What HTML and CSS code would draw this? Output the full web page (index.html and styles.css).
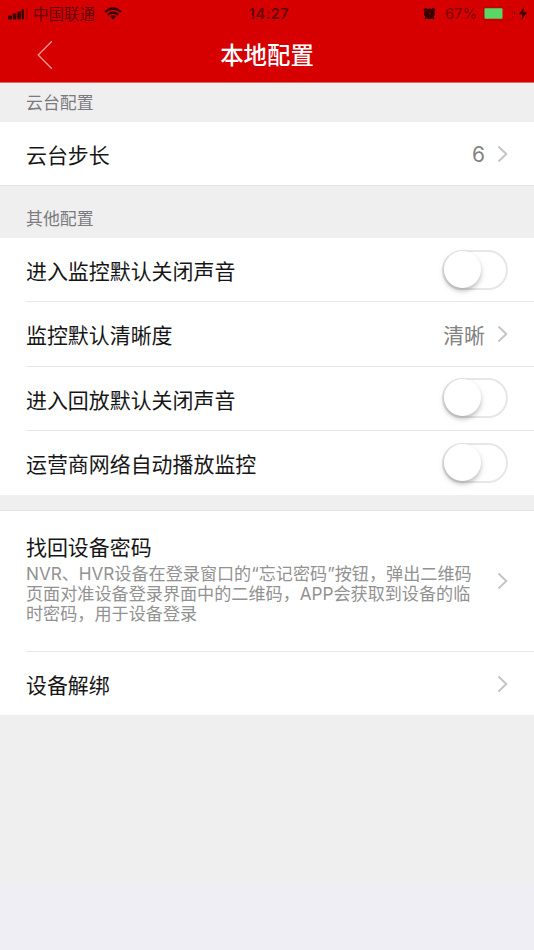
FILE: index.html
```
<!DOCTYPE html>
<html lang="zh-CN">
<head>
<meta charset="utf-8">
<title>本地配置</title>
<link rel="stylesheet" href="styles.css">
</head>
<body>
<header class="header">
  <div class="status">
    <div class="status-left">
      <svg class="signal" width="22" height="12" viewBox="0 0 22 12"><rect x="0" y="7.500" width="4" height="4" rx="1"/><rect x="4.700" y="5.500" width="3.600" height="6" rx="1"/><rect x="9.300" y="3.500" width="3.600" height="8" rx="1"/><rect x="13.600" y="1" width="2.400" height="10.500" rx="1"/><rect x="18" y="0" width="2" height="11.500" rx="1" opacity=".2"/></svg>
      <span class="carrier">中国联通</span>
      <svg class="wifi" width="18" height="13" viewBox="0 0 18 13"><path d="M1 5Q9-2 17 5M3.800 7.800Q9 3.200 14.200 7.800" fill="none" stroke="currentColor" stroke-width="2.300"/><path d="M6 9.600Q9 7 12 9.600L9 12.600Z"/></svg>
    </div>
    <div class="time">14:27</div>
    <div class="status-right">
      <svg width="13" height="13" viewBox="0 0 13 13"><circle cx="6.500" cy="6.800" r="5.400"/><path d="M1 3.500L3.500 1.300M12 3.500L9.500 1.300M3.200 10.500L2 12M9.800 10.500L11 12" stroke="currentColor" stroke-width="1.900"/><path d="M7 4.500V7H5" fill="none" stroke="#900000" stroke-width=".8"/></svg>
      <span class="percent">67%</span>
      <svg class="battery" width="33" height="15" viewBox="0 0 33 15"><rect x=".6" y=".8" width="28.800" height="13.400" rx="2.500" fill="none" stroke="#b40000" stroke-width="1"/><rect x="1.500" y="2.300" width="18" height="10.400" rx="1" fill="#58d764"/><path d="M31 5Q33 7.500 31 10Z" fill="#980000"/></svg>
      <svg class="bolt" width="8" height="13" viewBox="0 0 8 13"><path d="M5 0L0 7.300H3.400L2.500 13L8 5.300H4.500Z"/></svg>
    </div>
  </div>
  <nav class="nav">
    <svg class="back" width="16" height="30" viewBox="0 0 16 30"><path d="M14.800 1.300L1.200 15L14.800 28.700" fill="none" stroke="#ff9b94" stroke-width="1.300"/></svg>
    <h1>本地配置</h1>
    <span></span>
  </nav>
</header>
<main>
  <h2 class="section first">云台配置</h2>
  <div class="group one">
    <div class="row"><span>云台步长</span><span class="value">6</span><svg class="chevron" viewBox="0 0 11 18"><path d="M1.500 1.500L9.300 9L1.500 16.500"/></svg></div>
  </div>
  <h2 class="section other">其他配置</h2>
  <div class="group settings">
    <div class="row"><span>进入监控默认关闭声音</span><i class="switch"></i></div>
    <div class="row"><span>监控默认清晰度</span><span class="value">清晰</span><svg class="chevron" viewBox="0 0 11 18"><path d="M1.500 1.500L9.300 9L1.500 16.500"/></svg></div>
    <div class="row"><span>进入回放默认关闭声音</span><i class="switch"></i></div>
    <div class="row"><span>运营商网络自动播放监控</span><i class="switch"></i></div>
  </div>
  <div class="group device">
    <div class="row recover">
      <div class="copy"><div class="label">找回设备密码</div>
        <p>NVR、HVR设备在登录窗口的“忘记密码”按钮，弹出二维码<br>页面对准设备登录界面中的二维码，APP会获取到设备的临<br>时密码，用于设备登录</p></div>
      <svg class="chevron" viewBox="0 0 11 18"><path d="M1.500 1.500L9.300 9L1.500 16.500"/></svg>
    </div>
    <div class="row unbind"><span>设备解绑</span><svg class="chevron" viewBox="0 0 11 18"><path d="M1.500 1.500L9.300 9L1.500 16.500"/></svg></div>
  </div>
</main>
<footer class="bottom"></footer>
</body>
</html>
```
FILE: styles.css
```
* { box-sizing: border-box; }
body {
  margin: 0;
  width: 534px;
  height: 950px;
  display: flex;
  flex-direction: column;
  overflow: hidden;
  background: #efefef;
  font-family: Inter, "Noto Sans CJK SC", sans-serif;
  color: #161616;
}
h1, h2, p { margin: 0; }
.header { height: 83px; background: #d60000; border-bottom: 1px solid #df6b6b; }
.status {
  height: 27px;
  padding: 0 7px 0 8px;
  display: grid;
  grid-template-columns: 1fr auto 1fr;
  align-items: center;
  color: #350000;
  fill: currentColor;
}
.status-left, .status-right { display: flex; align-items: center; }
.status-right { justify-content: flex-end; }
.carrier { margin-left: 3px; padding-top: 2px; font-size: 15.500px; line-height: 20px; color: #650000; }
.wifi { margin-left: 9px; }
.time { padding-left: 3px; font-size: 14.500px; font-weight: 600; letter-spacing: .5px; color: #650000; }
.percent { margin-left: 8px; font-size: 14.800px; color: #7d0000; }
.battery { margin-left: 6px; }
.bolt { margin-left: 3px; }
.status-right > svg:first-child { margin-right: 1px; }
.nav {
  height: 55px;
  padding: 0 37px;
  display: grid;
  grid-template-columns: 1fr auto 1fr;
  align-items: center;
}
h1 { padding-top: 2px; font-size: 23.400px; line-height: 34px; font-weight: 500; color: #fff; }
.section { padding-left: 26px; font-size: 16.900px; font-weight: 400; color: #7b7b7f; }
.first { height: 39px; line-height: 41px; }
.other { height: 53px; line-height: 67px; border-top: 1px solid #e6e6ea; }
.group { background: #fff; }
.one { height: 63px; }
.row {
  height: 100%;
  display: flex;
  align-items: center;
  margin-left: 26px;
  padding-right: 26px;
  font-size: 20.950px;
  line-height: 30px;
}
.row > span { padding-top: 4px; }
.row > .value { padding-top: 3px; }
.row > :first-child { flex: 1; }
.settings { height: 257px; display: grid; grid-template-rows: 63px 65px 64px 65px; }
.settings .row + .row, .unbind { border-top: 1px solid #e8e8e9; }
.value { color: #828282; }
.chevron {
  width: 11px;
  height: 18px;
  margin-left: 12px;
  fill: none;
  stroke: #c5c5c9;
  stroke-width: 2;
}
.switch {
  width: 66px;
  height: 40px;
  border: 2px solid #e7e7e7;
  border-radius: 20px;
}
.switch::before {
  content: "";
  display: block;
  width: 37px;
  height: 37px;
  margin-top: -1px;
  border-radius: 50%;
  background: #fff;
  box-shadow: 0 3px 4px rgba(0,0,0,.2), 0 3px 10px rgba(0,0,0,.07);
}
.settings .row:nth-child(3) .switch { margin-bottom: 2px; }
.device {
  margin-top: 16px;
  height: 204px;
  box-shadow: 0 -1px #e3e3e6;
}
.recover { height: 140px; }
.label { line-height: 30px; }
p { padding-top: 1px; margin-bottom: 5px; font-size: 17.120px; line-height: 20px; color: #929292; white-space: nowrap; }
.recover .copy { width: 0; }
.unbind { height: 64px; }
.bottom { margin-top: auto; height: 66px; background: #efeef4; }
```
